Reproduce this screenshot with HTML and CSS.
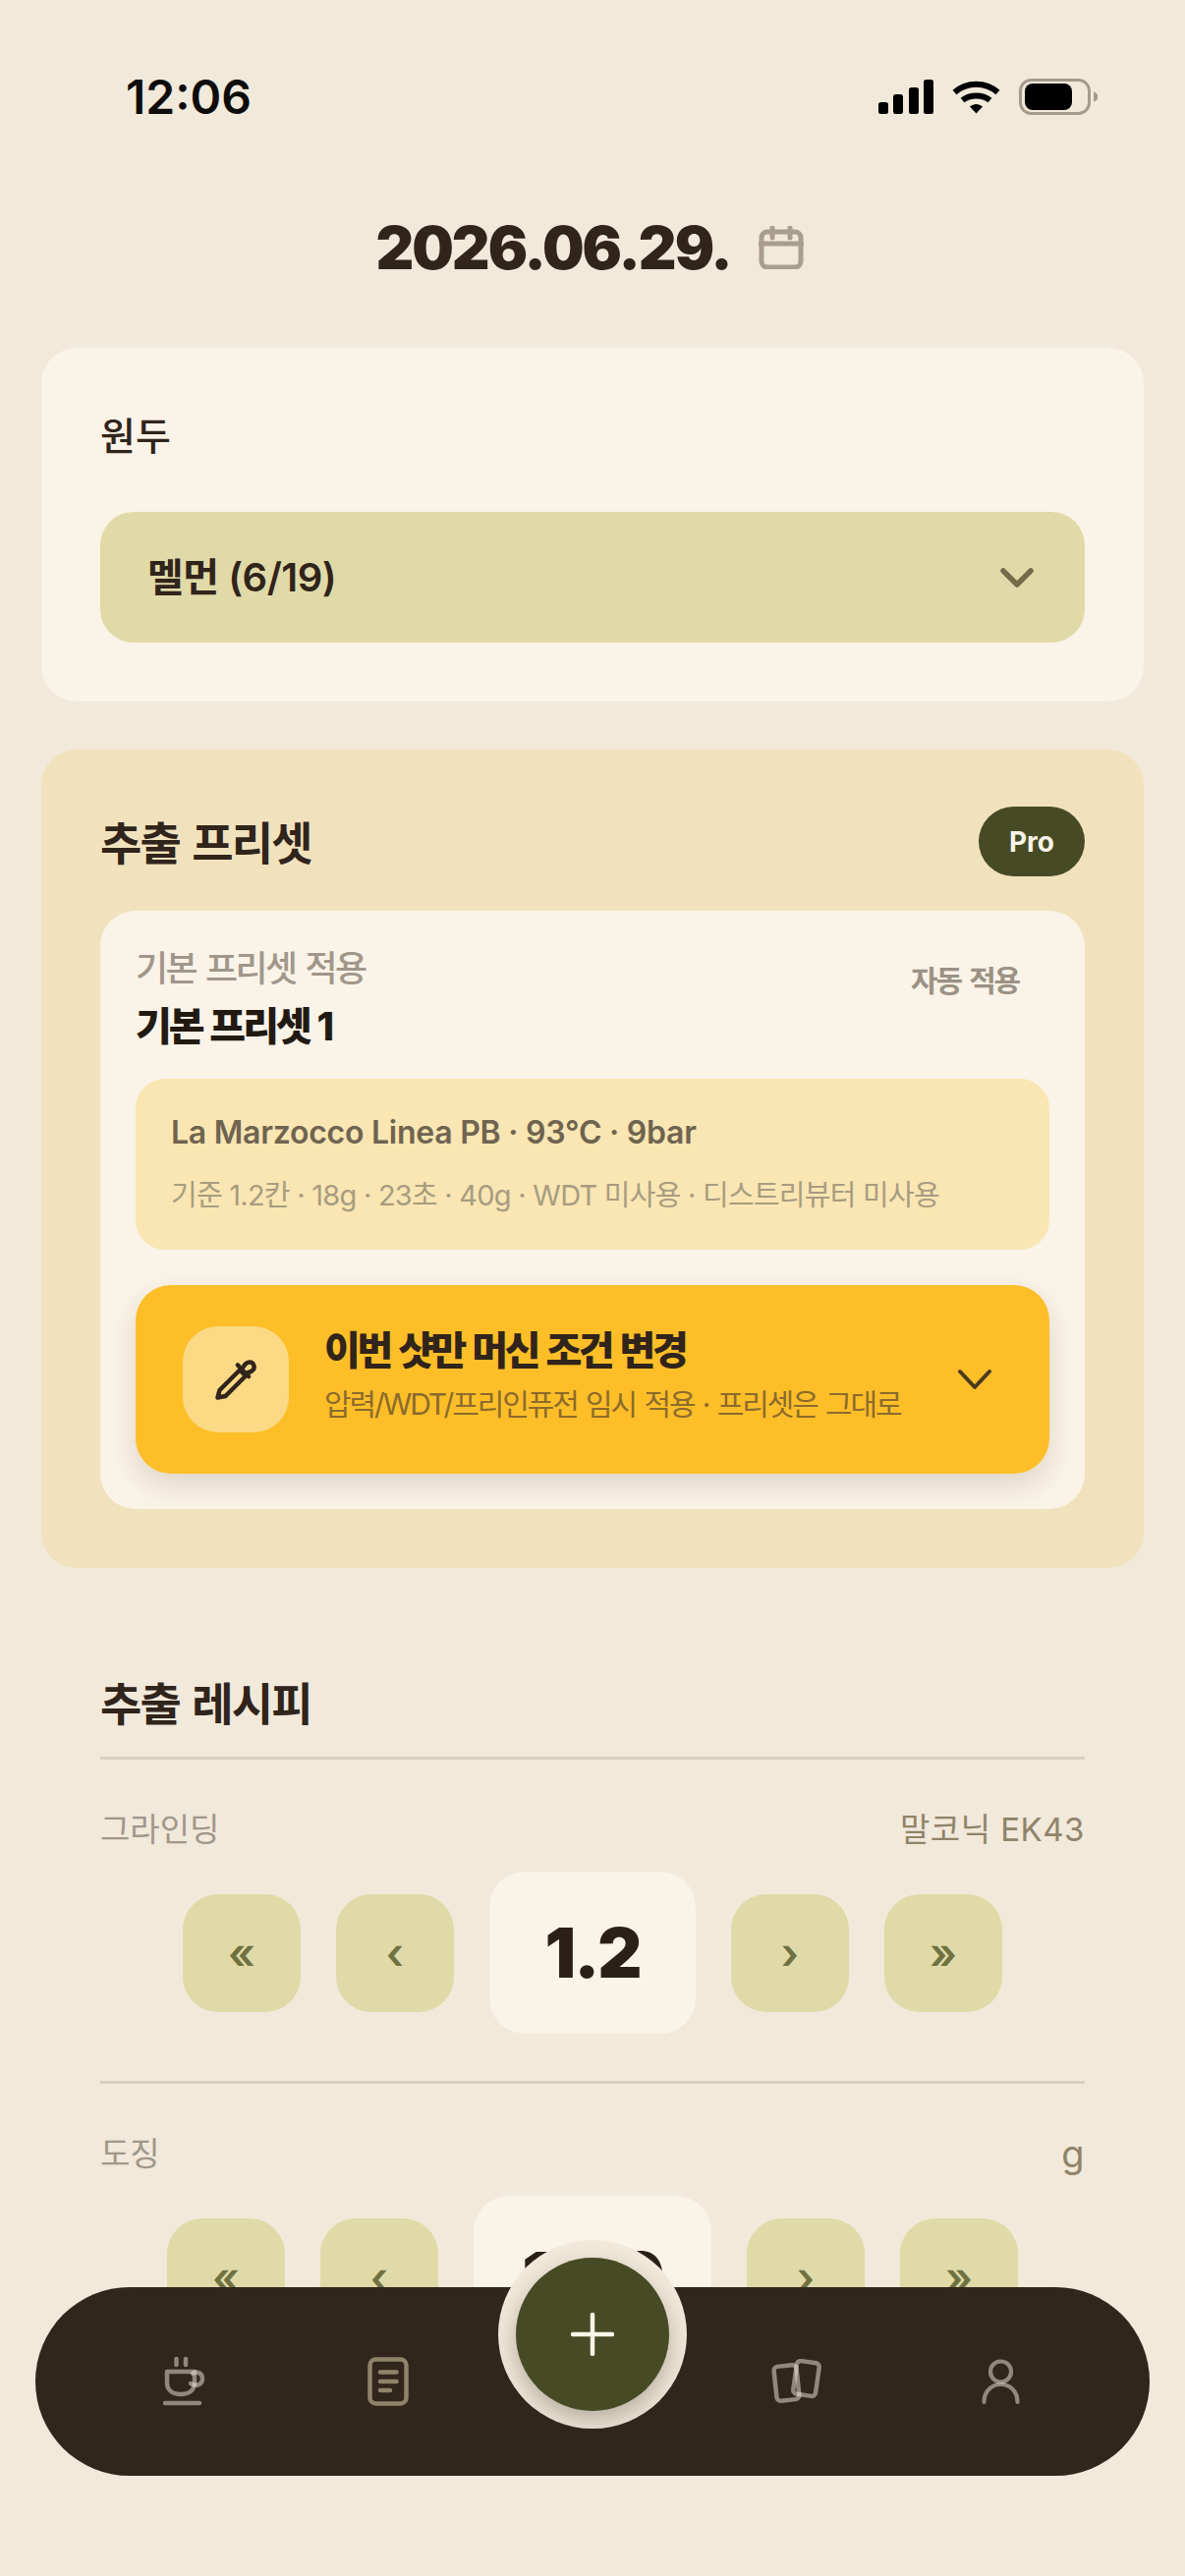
FILE: index.html
```html
<!DOCTYPE html>
<html lang="ko">
<head>
    <meta charset="UTF-8">
    <meta name="viewport" content="width=device-width, initial-scale=1.0">
    <title>추출 기록</title>
    <link rel="stylesheet" href="styles.css">
</head>
<body>

<div class="status-bar">
    <span class="time">12:06</span>
    <div class="status-icons">
        <svg class="signal" width="56" height="35" viewBox="0 0 56 35" fill="#000">
            <rect x="0" y="23" width="10" height="12" rx="2.5"/>
            <rect x="15" y="15" width="10" height="20" rx="2.5"/>
            <rect x="31" y="8" width="10" height="27" rx="2.5"/>
            <rect x="46" y="0" width="10" height="35" rx="2.5"/>
        </svg>
        <svg class="wifi" width="49" height="35" viewBox="0 0 49 35" fill="none" stroke="#000" stroke-width="6">
            <path d="M2.5 13 C15 2 34 2 46.5 13"/>
            <path d="M10.5 21 C18 15 31 15 38.5 21"/>
            <path d="M18 27.5 L24.5 34.5 L31 27.5 C27 24 22 24 18 27.5 Z" fill="#000" stroke="none"/>
        </svg>
        <svg class="battery" width="80" height="37" viewBox="0 0 80 37" fill="none">
            <rect x="1.5" y="1.5" width="70" height="34" rx="11" stroke="#a49b8b" stroke-width="3"/>
            <rect x="6" y="5" width="48" height="27" rx="8" fill="#000"/>
            <path d="M76 13 L80 16 L80 21 L76 24 Z" fill="#a49b8b"/>
        </svg>
    </div>
</div>

<div class="date-row">
    <span class="date">2026.06.29.</span>
    <svg width="46" height="44" viewBox="0 0 46 44" fill="none" stroke="#a99d8d" stroke-width="5" stroke-linecap="round">
        <rect x="3" y="6" width="40" height="36" rx="6"/>
        <path d="M2 18 H44"/>
        <path d="M14 2 V12"/>
        <path d="M32 2 V12"/>
    </svg>
</div>

<main class="page">
    <section class="card bean-card">
        <div class="bean-label">원두</div>
        <div class="bean-select">
            <span class="bean-name">멜먼 (6/19)</span>
            <svg width="34" height="20" viewBox="0 0 34 20" fill="none" stroke="#736b4a" stroke-width="5.5" stroke-linecap="round" stroke-linejoin="round">
                <path d="M3 3 L17 17 L31 3"/>
            </svg>
        </div>
    </section>

    <section class="preset-card">
        <div class="preset-head">
            <h2 class="section-title">추출 프리셋</h2>
            <span class="pro-badge">Pro</span>
        </div>
        <div class="preset-inner">
            <div class="preset-top">
                <div>
                    <div class="preset-sub">기본 프리셋 적용</div>
                    <div class="preset-name">기본 프리셋 1</div>
                </div>
                <span class="auto-label">자동 적용</span>
            </div>
            <div class="machine-panel">
                <div class="machine-name">La Marzocco Linea PB · 93°C · 9bar</div>
                <div class="machine-detail">기준 1.2칸 · 18g · 23초 · 40g · WDT 미사용 · 디스트리뷰터 미사용</div>
            </div>
            <div class="override">
                <div class="override-icon">
                    <svg width="42" height="42" viewBox="0 0 42 42" fill="none" stroke="#30241b" stroke-width="4.5" stroke-linecap="round" stroke-linejoin="round">
                        <path d="M2.5 39.5 L4.5 32 L25 11.5 L31 17.5 L10.5 38 Z"/>
                        <path d="M23 6.5 L34 18"/>
                        <path d="M29 8 C31 3 37 2 39 6 C41 10 38 13 33.5 14"/>
                    </svg>
                </div>
                <div class="override-text">
                    <div class="override-title">이번 샷만 머신 조건 변경</div>
                    <div class="override-sub">압력/WDT/프리인퓨전 임시 적용 · 프리셋은 그대로</div>
                </div>
                <svg class="override-chevron" width="34" height="22" viewBox="0 0 34 22" fill="none" stroke="#4a3a1e" stroke-width="4" stroke-linecap="round" stroke-linejoin="round">
                    <path d="M2 3 L17 19 L32 3"/>
                </svg>
            </div>
        </div>
    </section>

    <section class="recipe">
        <h2 class="section-title recipe-title">추출 레시피</h2>
        <div class="recipe-row">
            <div class="row-labels">
                <span class="row-name">그라인딩</span>
                <span class="row-unit">말코닉 EK43</span>
            </div>
            <div class="stepper">
                <button class="step">«</button>
                <button class="step">‹</button>
                <div class="value value-small">1.2</div>
                <button class="step">›</button>
                <button class="step">»</button>
            </div>
        </div>
        <div class="recipe-row">
            <div class="row-labels">
                <span class="row-name">도징</span>
                <span class="row-unit row-unit-large">g</span>
            </div>
            <div class="stepper">
                <button class="step">«</button>
                <button class="step">‹</button>
                <div class="value">18.0</div>
                <button class="step">›</button>
                <button class="step">»</button>
            </div>
        </div>
    </section>
</main>

<nav class="tabbar">
    <div class="tab">
        <svg width="44" height="50" viewBox="0 0 44 50" fill="none" stroke="#f1e9da" stroke-opacity="0.5" stroke-width="4.5" stroke-linecap="round" stroke-linejoin="round">
            <path d="M14.5 2 V8"/>
            <path d="M24 2 V8"/>
            <path d="M5 15 H33 V26 C33 34 27 38 19 38 C11 38 5 34 5 26 Z"/>
            <path d="M31 17 C34 14 41 16 41 22 C41 29 34 30 29 27"/>
            <path d="M3 47 H38"/>
        </svg>
    </div>
    <div class="tab">
        <svg width="42" height="50" viewBox="0 0 42 50" fill="none" stroke="#8f8469" stroke-width="4.5" stroke-linecap="round" stroke-linejoin="round">
            <rect x="2.5" y="2.5" width="37" height="45" rx="6"/>
            <path d="M13 15.5 H29.5"/>
            <path d="M13 25 H29.5"/>
            <path d="M13 34 H23"/>
        </svg>
    </div>
    <div class="tab"></div>
    <div class="tab">
        <svg width="52" height="46" viewBox="0 0 52 46" fill="none" stroke="#f1e9da" stroke-opacity="0.5" stroke-width="4.5">
            <rect x="4" y="7" width="23" height="35" rx="4" transform="rotate(-6 15.5 24.5)"/>
            <rect x="24" y="3" width="23" height="34" rx="4" transform="rotate(8 35.5 20)"/>
        </svg>
    </div>
    <div class="tab">
        <svg width="40" height="47" viewBox="0 0 40 47" fill="none" stroke="#f1e9da" stroke-opacity="0.5" stroke-width="4.2" stroke-linecap="round">
            <circle cx="19.5" cy="13" r="10.5"/>
            <path d="M2.5 44 C2.5 20 36.5 20 36.5 44"/>
        </svg>
    </div>
    <button class="fab">
        <span class="fab-inner">
            <svg width="44" height="44" viewBox="0 0 44 44" stroke="#faf3e7" stroke-width="4.5" stroke-linecap="round">
                <path d="M22 2 V42"/>
                <path d="M2 22 H42"/>
            </svg>
        </span>
    </button>
</nav>

</body>
</html>
```

FILE: styles.css
```css
* {
    box-sizing: border-box;
}

body {
    position: relative;
    height: 2622px;
    margin: 0;
    overflow: hidden;
    background-color: #f1e9da;
    color: #30241b;
    font-family: Inter, "Noto Sans CJK KR", sans-serif;
}

h2 {
    margin: 0;
}

.status-bar {
    display: flex;
    justify-content: space-between;
    align-items: center;
    height: 196px;
    padding: 0 89px 0 128px;
}

.time {
    font-size: 48px;
    font-weight: 600;
    color: #0d0c0a;
}

.status-icons {
    display: flex;
    align-items: center;
    gap: 19px;
}

.date-row {
    display: flex;
    justify-content: center;
    align-items: center;
    gap: 28px;
    height: 112px;
    margin-bottom: 46px;
    padding-right: 6px;
}

.date {
    font-size: 60px;
    font-weight: 900;
    letter-spacing: -2px;
}

.page {
    padding: 0 42px;
}

.card {
    background-color: #faf3e7;
    border-radius: 36px;
}

.bean-card {
    padding: 60px 60px 60px;
}

.bean-label {
    height: 60px;
    margin-bottom: 47px;
    font-size: 39px;
    font-weight: 500;
    line-height: 60px;
}

.bean-select {
    display: flex;
    justify-content: space-between;
    align-items: center;
    height: 133px;
    padding: 0 52px 0 48px;
    background-color: #e0daa8;
    border-radius: 34px;
    font-size: 40px;
    font-weight: 600;
    letter-spacing: -0.5px;
}

.bean-name {
    margin-bottom: 5px;
}

.preset-card {
    margin-top: 49px;
    padding: 58px 60px 60px;
    background-color: #f1e2bd;
    border-radius: 36px;
}

.preset-head {
    display: flex;
    justify-content: space-between;
    align-items: center;
    height: 71px;
    margin-bottom: 35px;
}

.section-title {
    margin-bottom: 3px;
    font-size: 46px;
    font-weight: 700;
    letter-spacing: -1.8px;
    word-spacing: 3px;
}

.pro-badge {
    display: flex;
    justify-content: center;
    align-items: center;
    width: 108px;
    height: 71px;
    background-color: #464b25;
    border-radius: 36px;
    color: #faf3e7;
    font-size: 28px;
    font-weight: 700;
}

.preset-inner {
    padding: 36px;
    background-color: #faf3e7;
    border-radius: 36px;
}

.preset-top {
    display: flex;
    justify-content: space-between;
    align-items: flex-start;
    margin-bottom: 28px;
}

.preset-sub {
    height: 46px;
    margin-bottom: 11px;
    color: #a0978a;
    font-size: 36px;
    font-weight: 500;
    letter-spacing: -2.6px;
    word-spacing: 3px;
    line-height: 46px;
}

.preset-name {
    height: 50px;
    color: #221a12;
    font-size: 40px;
    font-weight: 800;
    letter-spacing: -3px;
    word-spacing: 2px;
    line-height: 50px;
}

.auto-label {
    margin: 13px 31px 0 0;
    color: #9b9284;
    font-size: 30px;
    font-weight: 600;
    letter-spacing: -2.2px;
    word-spacing: 3px;
    line-height: 44px;
}

.machine-panel {
    display: flex;
    flex-direction: column;
    gap: 20px;
    padding: 33px 36px;
    background-color: #f9e6b2;
    border-radius: 30px;
}

.machine-name {
    color: #6f6450;
    font-size: 32px;
    font-weight: 600;
    letter-spacing: -0.25px;
    line-height: 44px;
}

.machine-detail {
    color: #a89c80;
    font-size: 29px;
    letter-spacing: -0.75px;
    line-height: 44px;
}

.override {
    display: flex;
    align-items: center;
    height: 192px;
    margin-top: 36px;
    padding: 0 59px 0 48px;
    background-color: #febe28;
    border-radius: 36px;
    box-shadow: 0 12px 30px rgba(60, 40, 10, 0.14);
}

.override-icon {
    display: flex;
    justify-content: center;
    align-items: center;
    flex-shrink: 0;
    width: 108px;
    height: 108px;
    background-color: #fbd985;
    border-radius: 36px;
}

.override-text {
    display: flex;
    flex-direction: column;
    gap: 8px;
    margin: 0 auto 10px 36px;
}

.override-title {
    font-size: 40px;
    font-weight: 800;
    letter-spacing: -3.4px;
    word-spacing: 3px;
    line-height: 52px;
}

.override-sub {
    color: #8b6b2c;
    font-size: 30px;
    letter-spacing: -2.1px;
    word-spacing: 2px;
    line-height: 40px;
}

.recipe {
    padding: 0 60px;
}

.recipe-title {
    margin-top: 106px;
    line-height: 64px;
    margin-bottom: 22px;
}

.recipe-row {
    padding: 49px 0 48px;
    border-top: 3px solid #d8d0bf;
}

.row-labels {
    display: flex;
    justify-content: space-between;
    align-items: center;
    height: 44px;
    margin-bottom: 21px;
    font-size: 33px;
    line-height: 44px;
}

.row-name {
    color: #a0978a;
}

.row-unit {
    color: #8f8469;
    letter-spacing: 0.5px;
}

.row-unit-large {
    font-size: 38px;
}

.stepper {
    display: flex;
    justify-content: center;
    align-items: center;
    gap: 36px;
}

.step {
    width: 120px;
    height: 120px;
    padding: 0;
    background-color: #e0daa8;
    border: none;
    border-radius: 36px;
    color: #6f7240;
    font-family: inherit;
    font-size: 44px;
    font-weight: 600;
}

.value {
    display: flex;
    justify-content: center;
    align-items: center;
    width: 242px;
    height: 165px;
    background-color: #faf3e7;
    border-radius: 36px;
    color: #2b2017;
    font-size: 70px;
    font-weight: 900;
    letter-spacing: -2px;
}

.value-small {
    width: 210px;
}

.tabbar {
    position: absolute;
    top: 2328px;
    left: 36px;
    display: grid;
    grid-template-columns: repeat(5, 208px);
    align-items: center;
    width: 1134px;
    height: 192px;
    padding: 0 47px;
    background-color: #31261c;
    border-radius: 96px;
}

.tab {
    display: flex;
    justify-content: center;
    align-items: center;
}

.fab {
    position: absolute;
    top: -48px;
    left: 471px;
    width: 192px;
    height: 192px;
    padding: 18px;
    overflow: hidden;
    background-color: #f1e9da;
    border: none;
    border-radius: 50%;
}

.fab-inner {
    display: flex;
    justify-content: center;
    align-items: center;
    width: 156px;
    height: 156px;
    background-color: #464b25;
    border-radius: 50%;
    box-shadow: 0 10px 24px rgba(48, 36, 27, 0.3);
}
```
